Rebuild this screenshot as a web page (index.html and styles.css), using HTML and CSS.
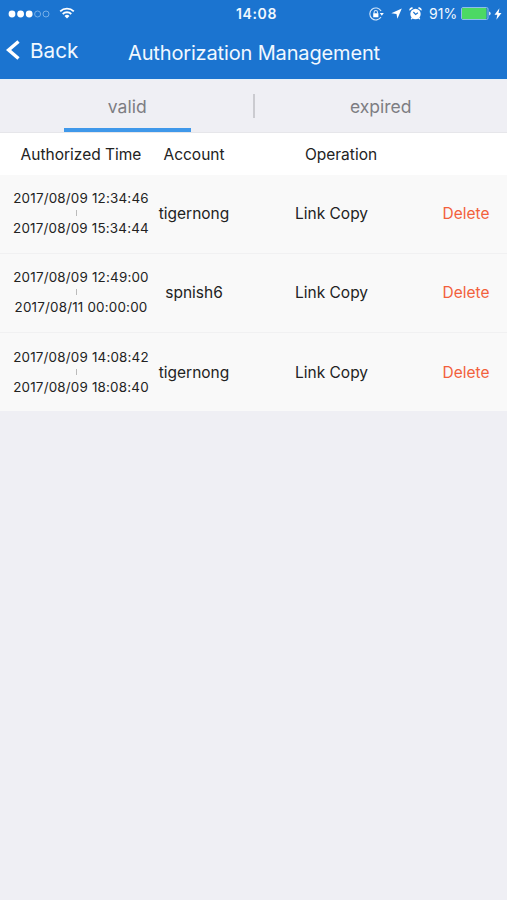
FILE: index.html
```
<!DOCTYPE html>
<html lang="en">
<head>
    <meta charset="UTF-8">
    <meta name="viewport" content="width=device-width, initial-scale=1.0">
    <title>Authorization Management</title>
    <link rel="stylesheet" href="styles.css">
</head>
<body>

    <header>
        <div class="status">
            <div class="status-left">
                <svg class="signal" width="42" height="8" viewBox="0 0 42 8">
                    <circle cx="4" cy="4" r="3.4"/>
                    <circle cx="12.6" cy="4" r="3.4"/>
                    <circle cx="21.2" cy="4" r="3.4"/>
                    <circle class="empty" cx="29.6" cy="4" r="3"/>
                    <circle class="empty" cx="38" cy="4" r="3"/>
                </svg>
                <svg class="wifi" width="16" height="12" viewBox="0 0 16 12">
                    <path d="M1.2 4.4a9.8 9.8 0 0 1 13.6 0M3.7 7a6.2 6.2 0 0 1 8.6 0"/>
                    <path class="fill" d="M8 11.6L5.5 9a3.6 3.6 0 0 1 5 0z"/>
                </svg>
            </div>
            <div class="clock">14:08</div>
            <div class="status-right">
                <svg class="lock" width="15" height="14" viewBox="0 0 15 14">
                    <path d="M12.1 4.1A6 6 0 1 0 12 10"/>
                    <path d="M5.1 6.5V5.2a1.7 1.7 0 0 1 3.4 0v1.3"/>
                    <path class="fill" d="M4.2 6.2h5.2v4H4.2zM10.8 6h4l-2 2.8z"/>
                </svg>
                <svg class="arrow" width="11" height="11" viewBox="0 0 11 11">
                    <path class="fill" d="M10.8.4L6.4 10.8 5.5 5.9.3 5.3z"/>
                </svg>
                <svg class="alarm" width="13" height="13" viewBox="0 0 13 13">
                    <path class="fill" d="M.6 3.7A2.3 2.3 0 0 1 4.2 1zM12.4 3.7A2.3 2.3 0 0 0 8.8 1zM2.8 10.2l1.2 1-1.5 1.4-.8-.7zM10.2 10.2l-1.2 1 1.5 1.4.8-.7z"/>
                    <circle class="fill" cx="6.5" cy="7" r="5.2"/>
                    <path class="hands" d="M4.4 5l2.2 2.4 2.3-1.7"/>
                </svg>
                <span class="percent">91%</span>
                <svg class="battery" width="31" height="13" viewBox="0 0 31 13">
                    <rect class="case" x=".5" y=".5" width="26.5" height="12" rx="1.5"/>
                    <rect class="level" x="1" y="1" width="24.5" height="11" rx="1"/>
                    <path class="fill" d="M28.2 4.6a2 2 0 0 1 0 3.8z"/>
                </svg>
                <svg class="bolt" width="8" height="12" viewBox="0 0 7 11">
                    <path class="fill" d="M4.8.3L.3 6.2h2.6L2 10.7l4.7-6.2H4z"/>
                </svg>
            </div>
        </div>
        <nav>
            <div class="back">
                <svg width="14" height="20" viewBox="0 0 14 20">
                    <path d="M12.5 1.5L2.6 10l9.9 8.5"/>
                </svg>
                <span>Back</span>
            </div>
            <h1>Authorization Management</h1>
        </nav>
    </header>

    <div class="tabs">
        <div class="tab active"><span>valid</span></div>
        <div class="tab"><span>expired</span></div>
    </div>

    <div class="list">
        <div class="row head">
            <div class="time">Authorized Time</div>
            <div class="account">Account</div>
            <div class="operation">Operation</div>
        </div>
        <div class="row">
            <div class="time"><p>2017/08/09 12:34:46</p><i></i><p>2017/08/09 15:34:44</p></div>
            <div class="account">tigernong</div>
            <div class="copy">Link Copy</div>
            <div class="delete">Delete</div>
        </div>
        <div class="row">
            <div class="time"><p>2017/08/09 12:49:00</p><i></i><p>2017/08/11 00:00:00</p></div>
            <div class="account">spnish6</div>
            <div class="copy">Link Copy</div>
            <div class="delete">Delete</div>
        </div>
        <div class="row">
            <div class="time"><p>2017/08/09 14:08:42</p><i></i><p>2017/08/09 18:08:40</p></div>
            <div class="account">tigernong</div>
            <div class="copy">Link Copy</div>
            <div class="delete">Delete</div>
        </div>
    </div>

</body>
</html>
```
FILE: styles.css
```
*{
    margin: 0;
    padding: 0;
    box-sizing: border-box;
}
body{
    min-height: 100vh;
    background-color: #efeff4;
    font-family: Inter, "Liberation Sans", sans-serif;
    color: #222;
}
svg{
    display: block;
    fill: none;
    stroke: #fff;
}
svg .fill{
    fill: #fff;
    stroke: none;
}
header{
    height: 79px;
    background-color: #1b74d0;
    color: #f1f8ff;
}
.status{
    height: 27px;
    display: grid;
    grid-template-columns: 1fr 60px 1fr;
    align-items: center;
}
.status-left{
    display: flex;
    align-items: center;
    padding-left: 8px;
}
.signal circle{
    fill: #fff;
    stroke: none;
}
.signal .empty{
    fill: none;
    stroke: #7fb4ea;
    stroke-width: 0.9;
}
.wifi{
    margin-left: 9px;
    margin-top: -2px;
    stroke-width: 1.8;
}
.clock{
    text-align: center;
    font-size: 14px;
    font-weight: 600;
    letter-spacing: 0.6px;
    padding-left: 6px;
}
.status-right{
    display: flex;
    align-items: center;
    justify-content: flex-end;
    padding-right: 5px;
}
.lock{
    stroke: #d5e7fa;
    stroke-width: 1.1;
}
.arrow{
    margin-left: 7px;
}
.alarm{
    margin-left: 7px;
}
.alarm .hands{
    stroke: #1b74d0;
    stroke-width: 1.2;
}
.percent{
    width: 28px;
    margin: 0 4px 0 7px;
    font-size: 14px;
    white-space: nowrap;
}
.battery .case{
    stroke: #8fbdeb;
}
.battery .level{
    fill: #4cd964;
    stroke: none;
}
.bolt{
    margin-left: 2px;
}
nav{
    height: 52px;
    display: flex;
    align-items: center;
}
.back{
    width: 128px;
    display: flex;
    align-items: center;
    padding-left: 6px;
    padding-bottom: 5px;
    font-size: 20.7px;
}
.back svg{
    margin-right: 10px;
    margin-bottom: 2px;
    stroke-width: 3.4;
}
h1{
    font-size: 20px;
    font-weight: 400;
    letter-spacing: -0.15px;
    white-space: nowrap;
}
.tabs{
    height: 54px;
    display: flex;
    border-top: 1px solid #e5f1fa;
    border-bottom: 1px solid #e6e6ea;
}
.tab{
    flex: 1;
    display: flex;
    justify-content: center;
    align-items: center;
    position: relative;
    font-size: 17.5px;
    color: #7d7d82;
    padding-left: 1px;
    padding-top: 1px;
}
.tab.active::before{
    content: "";
    position: absolute;
    right: -1px;
    top: 14px;
    width: 2px;
    height: 24px;
    background-color: #cbcbd0;
}
.tab.active::after{
    content: "";
    position: absolute;
    left: 64px;
    bottom: 0;
    width: 127px;
    height: 4px;
    background-color: #3f98ea;
}
.row{
    height: 79px;
    display: grid;
    grid-template-columns: 155px 78px 197px 1fr;
    align-items: center;
    text-align: center;
    font-size: 15.5px;
    padding-bottom: 2px;
    background-color: #f9f9f9;
    border-bottom: 1px solid #f1f1f2;
}
.row:last-child{
    height: 78px;
    padding-bottom: 0;
    border-bottom: 0;
}
.row.head{
    height: 42px;
    padding-bottom: 0;
    background-color: #fff;
    border-bottom: 0;
}
.time{
    padding-left: 7px;
    font-size: 13.4px;
    letter-spacing: 0.2px;
    white-space: nowrap;
}
.head .time{
    font-size: 15.5px;
    letter-spacing: 0;
}
.head .operation{
    padding-left: 19px;
}
.time p{
    line-height: 16px;
}
.time i{
    display: block;
    width: 1px;
    height: 6px;
    margin: 4px auto 4px 69px;
    background-color: #bbb;
}
.delete{
    color: #f2603c;
    padding-right: 5px;
}
```
